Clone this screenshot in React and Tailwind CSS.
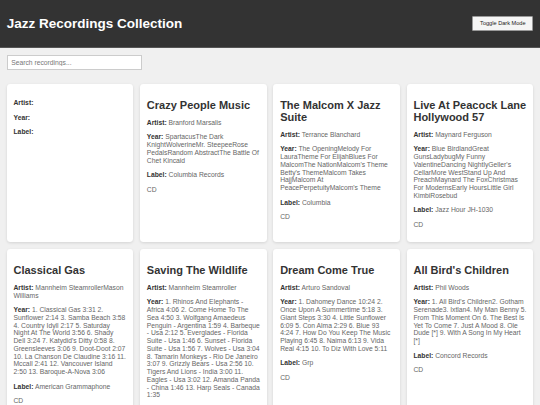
import React, { useState } from 'react';

const recordings = [
  { title: '', artist: '', year: '', label: '', format: '' },
  {
    title: 'Crazy People Music',
    artist: 'Branford Marsalis',
    year: 'SpartacusThe Dark KnightWolverineMr. SteepeeRose PedalsRandom AbstractThe Battle Of Chet Kincaid',
    label: 'Columbia Records',
    format: 'CD',
  },
  {
    title: 'The Malcom X Jazz Suite',
    artist: 'Terrance Blanchard',
    year: "The OpeningMelody For LauraTheme For ElijahBlues For MalcomThe NationMalcom's Theme Betty's ThemeMalcom Takes HajjMalcom At PeacePerpetuityMalcom's Theme",
    label: 'Columbia',
    format: 'CD',
  },
  {
    title: 'Live At Peacock Lane Hollywood 57',
    artist: 'Maynard Ferguson',
    year: "Blue BirdlandGreat GunsLadybugMy Funny ValentineDancing NightlyGeller's CellarMore WestStand Up And PreachMaynard The FoxChristmas For ModernsEarly HoursLittle Girl KimbiRosebud",
    label: 'Jazz Hour JH-1030',
    format: 'CD',
  },
  {
    title: 'Classical Gas',
    artist: 'Mannheim SteamrollerMason Williams',
    year: "1. Classical Gas 3:31 2. Sunflower 2:14 3. Samba Beach 3:58 4. Country Idyll 2:17 5. Saturday Night At The World 3:56 6. Shady Dell 3:24 7. Katydid's Ditty 0:58 8. Greensleeves 3:06 9. Doot-Doot 2:07 10. La Chanson De Claudine 3:16 11. Mccall 2:41 12. Vancouver Island 2:50 13. Baroque-A-Nova 3:06",
    label: 'American Grammaphone',
    format: 'CD',
  },
  {
    title: 'Saving The Wildlife',
    artist: 'Mannheim Steamroller',
    year: '1. Rhinos And Elephants - Africa 4:06 2. Come Home To The Sea 4:50 3. Wolfgang Amaedeus Penguin - Argentina 1:59 4. Barbeque - Usa 2:12 5. Everglades - Florida Suite - Usa 1:46 6. Sunset - Florida Suite - Usa 1:56 7. Wolves - Usa 3:04 8. Tamarin Monkeys - Rio De Janeiro 3:07 9. Grizzly Bears - Usa 2:56 10. Tigers And Lions - India 3:00 11. Eagles - Usa 3:02 12. Amanda Panda - China 1:46 13. Harp Seals - Canada 1:35',
    label: 'American Grammaphone',
    format: 'CD',
  },
  {
    title: 'Dream Come True',
    artist: 'Arturo Sandoval',
    year: '1. Dahomey Dance 10:24 2. Once Upon A Summertime 5:18 3. Giant Steps 3:30 4. Little Sunflower 6:09 5. Con Alma 2:29 6. Blue 93 4:24 7. How Do You Keep The Music Playing 6:45 8. Naima 6:13 9. Vida Real 4:15 10. To Diz With Love 5:11',
    label: 'Grp',
    format: 'CD',
  },
  {
    title: "All Bird's Children",
    artist: 'Phil Woods',
    year: "1. All Bird's Children2. Gotham Serenade3. Ixtlan4. My Man Benny 5. From This Moment On 6. The Best Is Yet To Come 7. Just A Mood 8. Ole Dude [*] 9. With A Song In My Heart [*]",
    label: 'Concord Records',
    format: 'CD',
  },
];

function Card({ r }) {
  return (
    <div className="bg-white rounded-[3.4px] shadow-[0_1px_3px_rgba(0,0,0,0.12)] p-[6.75px]">
      <h2 className="text-[11px] font-bold text-[#333] leading-[1.1] mt-[8.4px] mb-[7.6px]">{r.title}</h2>
      <p className="my-[6.75px] text-[#666]"><strong className="text-[#333]">Artist:</strong> {r.artist}</p>
      <p className="my-[6.75px] text-[#666]"><strong className="text-[#333]">Year:</strong> {r.year}</p>
      <p className="my-[6.75px] text-[#666]"><strong className="text-[#333]">Label:</strong> {r.label}</p>
      {r.format && <p className="my-[6.75px] text-[#666]">{r.format}</p>}
    </div>
  );
}

export default function App() {
  const [query, setQuery] = useState('');
  const list = recordings.filter((r) =>
    (r.title + r.artist).toLowerCase().includes(query.toLowerCase())
  );

  return (
    <div className="min-h-screen bg-[#f0f0f0] text-[6.75px] leading-[1.15] font-['Liberation_Sans',Arial,sans-serif]">
      <header className="bg-[#333] text-white px-[6.75px] py-[6.75px] flex items-center justify-between border-b border-[#555]">
        <h1 className="text-[13.5px] font-bold my-[9px] leading-[1.15]">Jazz Recordings Collection</h1>
        <button className="bg-[#f5f5f5] text-[#222] border border-[#999] text-[5.6px] px-[6.75px] h-[15px] rounded-[1px]">
          Toggle Dark Mode
        </button>
      </header>

      <div className="px-[6.75px] pt-[6.5px]">
        <input
          value={query}
          onChange={(e) => setQuery(e.target.value)}
          placeholder="Search recordings..."
          className="w-[135px] h-[15px] px-[3.4px] bg-white border border-[#ccc] text-[6.75px] placeholder:text-[#777] outline-none"
        />
      </div>

      <div className="grid grid-cols-4 gap-[6.75px] px-[6.75px] pt-[14.5px] pb-[6.75px]">
        {list.map((r, i) => (
          <Card key={i} r={r} />
        ))}
      </div>
    </div>
  );
}
